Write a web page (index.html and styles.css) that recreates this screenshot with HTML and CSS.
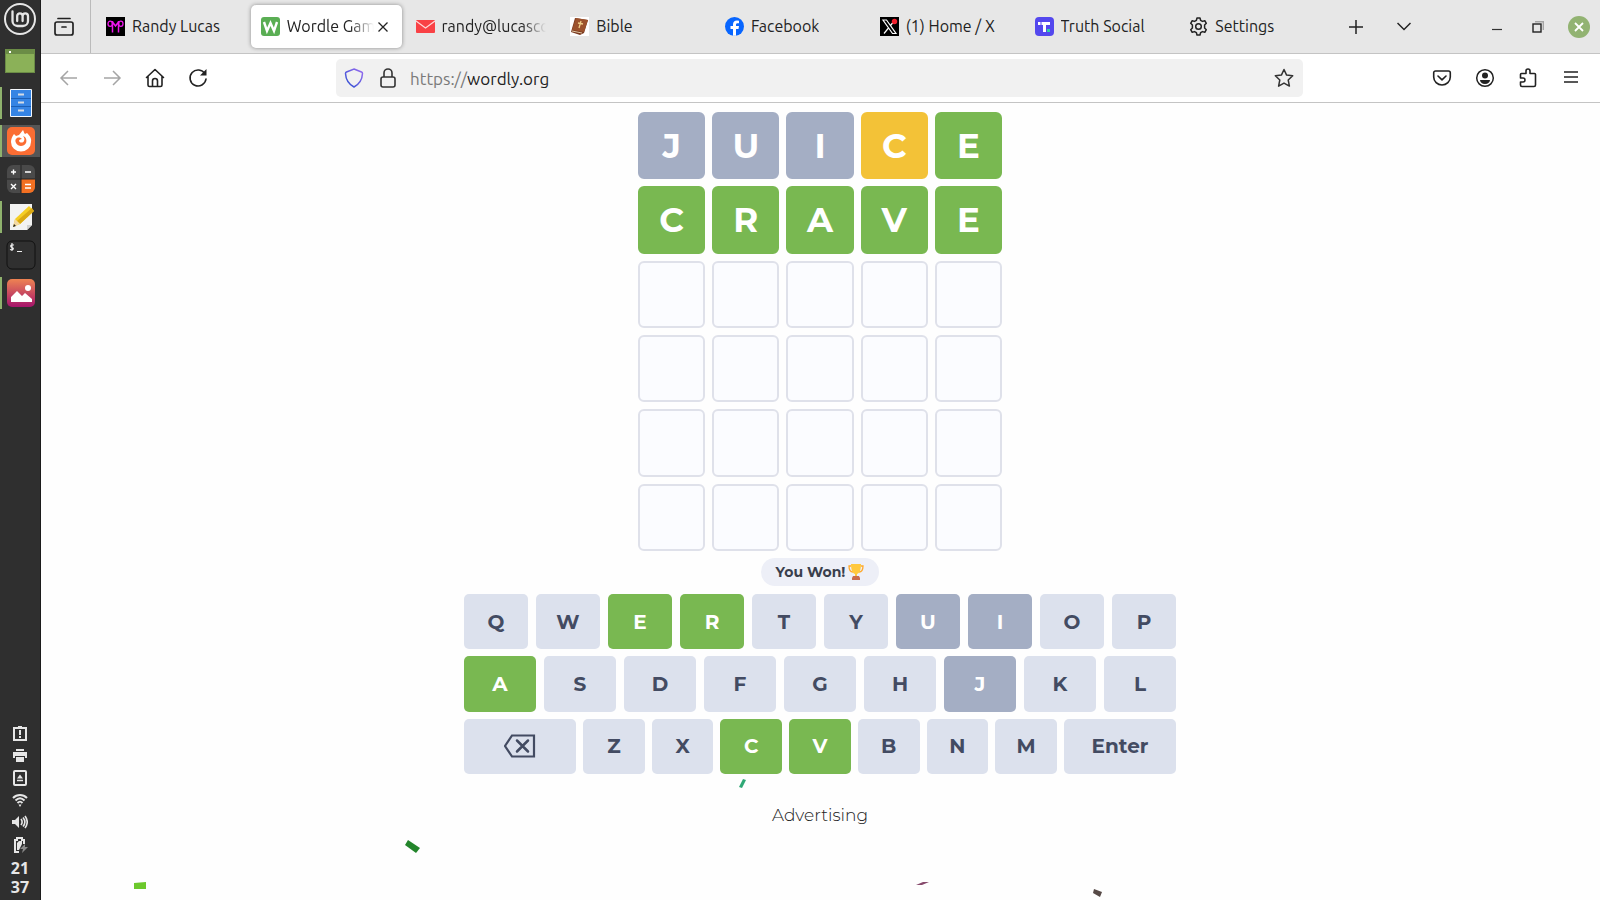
FILE: index.html
```
<!DOCTYPE html>
<html lang="en">
<head>
  <meta charset="UTF-8">
  <meta name="viewport" content="width=device-width, initial-scale=1">
  <title>Wordle Game</title>
  <link rel="stylesheet" href="styles.css">
</head>
<body>
  <!-- desktop panel -->
  <aside class="panel">
    <button class="launcher menu" aria-label="Menu">
      <svg width="34" height="34" viewBox="0 0 34 34" fill="none" stroke="#e6e6e6">
        <circle cx="17" cy="17" r="15" stroke-width="2"/>
        <path d="M9.500 9.500V19a5 5 0 0 0 5 5H20a5 5 0 0 0 5-5v-5a2.700 2.700 0 0 0-5.400 0v5M19.600 14a2.700 2.700 0 0 0-5.400 0v5" stroke-width="2.300" stroke-linecap="round"/>
      </svg>
    </button>
    <button class="launcher desktop" aria-label="Show desktop">
      <svg width="30" height="24" viewBox="0 0 30 24">
        <rect width="30" height="24" fill="#6b8c46"/>
        <rect x="1" y="5" width="28" height="18" fill="#8bb158"/>
        <rect x="4" y="2" width="2" height="2" fill="#fff"/>
      </svg>
    </button>
    <button class="launcher open" aria-label="Files">
      <svg width="22" height="28" viewBox="0 0 22 28">
        <rect width="22" height="28" rx="1" fill="#f5f8fc"/>
        <rect x="1" y="1" width="20" height="26" fill="#3584e4"/>
        <path d="M1 9.500h20M1 17.500h20" stroke="#1c5fb5"/>
        <path d="M8 5.500h6M8 13.500h6M8 21.500h6" stroke="#d5dbe3" stroke-width="2"/>
      </svg>
    </button>
    <button class="launcher open current" aria-label="Firefox">
      <svg width="28" height="28" viewBox="0 0 28 28">
        <rect width="28" height="28" rx="5" fill="#fb6d33"/>
        <path d="M7 7l2 2 3-1 4-5c1 2 1 3 2 4l2-1c2 2 5 5 4 9a10 9.500 0 0 1-20 0c0-3 1-5 3-8z" fill="#fff"/>
        <path d="M10 11c2-1 4 0 5 1-2 0-3 1-3 2 1 2 4 2 5 0 1-2 0-4-1-5 3 1 4 4 3 7-2 4-8 4-10 0-1-2-1-4 1-5z" fill="#fb6d33"/>
      </svg>
    </button>
    <button class="launcher" aria-label="Calculator">
      <svg width="28" height="28" viewBox="0 0 28 28">
        <rect width="28" height="28" rx="6" fill="#4a4a4a"/>
        <path d="M14 14h14v8a6 6 0 0 1-6 6h-8z" fill="#f37022"/>
        <path d="M14 0v28M0 14h28" stroke="#222"/>
        <path d="M4 7h5M6.500 4.500v5M18 7h6M4 19l5 5M9 19l-5 5M18 19.500h6M18 23h6" stroke="#fff" stroke-width="1.400"/>
      </svg>
    </button>
    <button class="launcher open" aria-label="Text editor">
      <svg width="28" height="28" viewBox="0 0 28 28">
        <path d="M3 1h22v21l-5 5H3z" fill="#f3f3f2"/>
        <path d="M20 27v-5h5z" fill="#d2d2d0"/>
        <path d="M6 24l2-8L22 3l5 5-14 13z" fill="#f5ce24"/>
        <path d="M25 5l2 3-14 13-3-3z" fill="#dba914"/>
        <path d="M6 24l2-8 5 5z" fill="#f3d9a4"/>
        <path d="M6 24l1-3 2 2z" fill="#222"/>
      </svg>
    </button>
    <button class="launcher" aria-label="Terminal">
      <svg width="30" height="30" viewBox="0 0 30 30">
        <rect x="1" y="1" width="28" height="28" rx="5" fill="#303030" stroke="#111"/>
        <path d="M8 5c-4-1-4 2-2 2.500s2 3-2 2M6 3v8M11 11.500h5" fill="none" stroke="#eee" stroke-width="1.200"/>
      </svg>
    </button>
    <button class="launcher open" aria-label="Image viewer">
      <svg width="28" height="28" viewBox="0 0 28 28">
        <defs>
          <linearGradient id="sunset" x1="0" y1="0" x2="0" y2="1">
            <stop offset="0" stop-color="#ee8352"/>
            <stop offset="1" stop-color="#a5146c"/>
          </linearGradient>
        </defs>
        <rect width="28" height="28" rx="5" fill="url(#sunset)"/>
        <path d="M4 23v-5l6-6 5 5 3-3 7 6v3z" fill="#fff"/>
        <circle cx="21" cy="9" r="3" fill="#fff"/>
      </svg>
    </button>

    <div class="tray">
      <div class="tray-icons">
        <svg width="16" height="16" viewBox="0 0 16 16" fill="none" stroke="#e6e6e6" stroke-width="2"><path d="M2 3h12v12H2z"/><path d="M6 2h4M8 5v5M8 11v2"/></svg>
        <svg width="16" height="16" viewBox="0 0 16 16" fill="#e6e6e6"><path d="M4 2h8v2H4zM1 5h14v6h-2V9H3v2H1zM4 10h8v5H4z"/></svg>
        <svg width="16" height="16" viewBox="0 0 16 16" fill="none" stroke="#e6e6e6" stroke-width="2"><rect x="2" y="1" width="12" height="14" rx="1"/><path d="M5 10.500h6" stroke-width="1.500"/><path d="M5 8.500l3-4 3 4z" fill="#e6e6e6" stroke="none"/></svg>
        <svg width="16" height="16" viewBox="0 0 16 16" fill="none" stroke="#e6e6e6" stroke-width="2"><path d="M1 6c4-4 10-4 14 0M3.500 8.500c3-3 6-3 9 0M5.500 11c2-2 3-2 5 0"/><path d="M6.500 12.500h3L8 15z" fill="#e6e6e6" stroke="none"/></svg>
        <svg width="16" height="16" viewBox="0 0 16 16" fill="none" stroke="#e6e6e6" stroke-width="1.600"><path d="M0 6h3l4-4v12l-4-4H0z" fill="#e6e6e6" stroke="none"/><path d="M9 5c1.500 2 1.500 4 0 6M11 3.500c2.500 3 2.500 6 0 9M13 2c3 4 3 8 0 12"/></svg>
        <svg width="16" height="16" viewBox="0 0 16 16" fill="none" stroke="#e6e6e6" stroke-width="2"><path d="M7 15H3V3h2V1h5v2h2v4"/><path d="M5 13V6l2-2h3v3l-3 6z" fill="#e6e6e6" stroke="none"/><path d="M13 7l-5 5h3l-1 4 6-6h-3z" fill="#8a8a8a" stroke="none"/></svg>
      </div>
      <div class="clock"><span>21</span><span>37</span></div>
    </div>
  </aside>

  <div class="browser">
    <header class="tabbar">
      <button class="recent" aria-label="Recent browsing">
        <svg width="20" height="20" viewBox="0 0 20 20" fill="none" stroke="#222" stroke-width="1.700" stroke-linecap="round"><path d="M4 1.500h12M1 7a2 2 0 0 1 2-2h14a2 2 0 0 1 2 2v9a2 2 0 0 1-2 2H3a2 2 0 0 1-2-2zM8 10h4"/></svg>
      </button>
      <nav class="tabs">
        <div class="tab">
          <button class="tab-link">
            <svg width="19" height="19" viewBox="0 0 19 19"><rect width="19" height="19" fill="#000"/><path d="M6.500 15.500V4M12.500 15.500V4M6.500 5l3 4 3-4" fill="none" stroke="#f017ef" stroke-width="1.500"/><ellipse cx="4.200" cy="6.800" rx="2.200" ry="2.600" fill="none" stroke="#f017ef" stroke-width="1.300"/><ellipse cx="14.800" cy="6.800" rx="2.200" ry="2.600" fill="none" stroke="#f017ef" stroke-width="1.300"/></svg>
            <span>Randy Lucas</span>
          </button>
        </div>
        <div class="tab active">
          <button class="tab-link">
            <svg width="19" height="19" viewBox="0 0 19 19"><rect width="19" height="19" rx="3" fill="#5aae54"/><path d="M3 5l3 9 3.500-8L13 14l3-9" fill="none" stroke="#fff" stroke-width="2.400"/></svg>
            <span class="fade">Wordle Game</span>
          </button>
          <button class="tab-close" aria-label="Close tab">
            <svg width="10" height="10" viewBox="0 0 10 10" stroke="#222" stroke-width="1.300"><path d="M0.500 0.500l9 9M9.500 0.500l-9 9"/></svg>
          </button>
        </div>
        <div class="tab">
          <button class="tab-link">
            <svg width="19" height="19" viewBox="0 0 19 19"><rect y="3" width="19" height="13" rx="1" fill="#f94145"/><path d="M0 4l9.500 7L19 4" fill="none" stroke="#ffd9d9" stroke-width="1.200"/></svg>
            <span class="fade">randy@lucasco</span>
          </button>
        </div>
        <div class="tab">
          <button class="tab-link">
            <svg width="19" height="19" viewBox="0 0 19 19"><rect width="19" height="19" fill="#fff"/><path d="M5 1l13 2-4 13-4 2L1 15z" fill="#7a3a20"/><path d="M6 1l12 2-4 12-12-2z" fill="#9c522d"/><path d="M11 4l-2 7M8 6l5 1" stroke="#f0cf8a" stroke-width="1.300"/><path d="M2 14l10 2" stroke="#e2c8a5"/></svg>
            <span>Bible</span>
          </button>
        </div>
        <div class="tab">
          <button class="tab-link">
            <svg width="19" height="19" viewBox="0 0 19 19"><circle cx="9.500" cy="9.500" r="9.500" fill="#0866ff"/><path d="M8 18.800V12H5.500V9H8V7.500C8 5 9.500 3.500 12 3.500l2 .2v2.500h-1.500c-1 0-1.500.5-1.500 1.500V9h3l-.5 3H11v6.800z" fill="#fff"/></svg>
            <span>Facebook</span>
          </button>
        </div>
        <div class="tab">
          <button class="tab-link">
            <svg width="19" height="19" viewBox="0 0 19 19"><rect width="19" height="19" fill="#000"/><path d="M3 3h3.500L16 16.500h-3.500zM15 3L10.500 8.500M8.500 11L4 16.500" fill="none" stroke="#fff" stroke-width="1.200"/><circle cx="14.500" cy="4.500" r="2.700" fill="#f4212e"/></svg>
            <span>(1) Home / X</span>
          </button>
        </div>
        <div class="tab">
          <button class="tab-link">
            <svg width="19" height="19" viewBox="0 0 19 19"><rect width="19" height="19" rx="4" fill="#5448ee"/><path d="M3 5h2.500v3H3zM6.500 5H15v3h-4v7H8V8H6.500z" fill="#fff"/><rect x="12" y="12" width="3" height="3" fill="#2fd3a5"/></svg>
            <span>Truth Social</span>
          </button>
        </div>
        <div class="tab">
          <button class="tab-link">
            <svg width="19" height="19" viewBox="0 0 19 19" fill="none" stroke="#222" stroke-width="1.500" stroke-linejoin="round"><path d="M8 1h3l.6 2.300 1.900 1.100 2.300-.7 1.500 2.600-1.700 1.700v3l1.700 1.700-1.500 2.600-2.300-.7-1.900 1.100L11 18H8l-.6-2.300-1.900-1.100-2.300.7-1.500-2.600L3.400 11V8L1.700 6.300l1.500-2.600 2.300.7 1.900-1.100z"/><circle cx="9.500" cy="9.500" r="2.800"/></svg>
            <span>Settings</span>
          </button>
        </div>
      </nav>
      <div class="tab-tools">
        <button aria-label="New tab">
          <svg width="14" height="14" viewBox="0 0 14 14" stroke="#222" stroke-width="1.500"><path d="M7 0v14M0 7h14"/></svg>
        </button>
        <button aria-label="List all tabs">
          <svg width="14" height="14" viewBox="0 0 14 14" fill="none" stroke="#222" stroke-width="1.500"><path d="M0.500 3L7 9.500 13.500 3"/></svg>
        </button>
      </div>
      <div class="window-tools">
        <button aria-label="Minimize">
          <svg width="12" height="12" viewBox="0 0 12 12" stroke="#333" stroke-width="1.200"><path d="M1 8.500h10"/></svg>
        </button>
        <button aria-label="Restore">
          <svg width="12" height="12" viewBox="0 0 12 12" fill="none"><path d="M3 .7h8.300V9" stroke="#a5a5a5" stroke-width="1.400"/><rect x="1" y="3" width="8" height="8" stroke="#222" stroke-width="1.400"/></svg>
        </button>
        <button aria-label="Close">
          <svg width="22" height="22" viewBox="0 0 22 22"><circle cx="11" cy="11" r="11" fill="#92b372"/><path d="M7 7l8 8M15 7l-8 8" stroke="#fff" stroke-width="1.800"/></svg>
        </button>
      </div>
    </header>

    <div class="toolbar">
      <div class="nav-buttons">
        <button aria-label="Back" disabled>
          <svg width="20" height="20" viewBox="0 0 20 20" fill="none" stroke="#a5a5a5" stroke-width="1.500"><path d="M18 10H2M9 3l-7 7 7 7"/></svg>
        </button>
        <button aria-label="Forward" disabled>
          <svg width="20" height="20" viewBox="0 0 20 20" fill="none" stroke="#a5a5a5" stroke-width="1.500"><path d="M2 10h16M11 3l7 7-7 7"/></svg>
        </button>
        <button aria-label="Home">
          <svg width="20" height="20" viewBox="0 0 20 20" fill="none" stroke="#222" stroke-width="1.600" stroke-linejoin="round" stroke-linecap="round"><path d="M1.500 9.500L10 1.500l8.500 8M3 8.500V17a1.500 1.500 0 0 0 1.500 1.500h11A1.500 1.500 0 0 0 17 17V8.500M7.500 18v-5a2.500 2.500 0 0 1 5 0v5"/></svg>
        </button>
        <button aria-label="Reload">
          <svg width="20" height="20" viewBox="0 0 20 20" fill="none" stroke="#222" stroke-width="1.600"><path d="M17 6A8 8 0 1 0 18 11" stroke-linecap="round"/><path d="M18.500 1v6.500H12z" fill="#222" stroke="none"/></svg>
        </button>
      </div>
      <div class="urlbar">
        <svg width="20" height="20" viewBox="0 0 20 20" fill="none" stroke-width="1.500">
          <defs>
            <linearGradient id="shield" x1="0" y1="1" x2="1" y2="0">
              <stop offset="0" stop-color="#2a4fd0"/>
              <stop offset="1" stop-color="#9a6cf0"/>
            </linearGradient>
          </defs>
          <path d="M10 1l7.500 3c.8.3 1 .8 1 1.500-.3 6-3 10.500-8.500 13.500C4.500 16 1.800 11.500 1.500 5.500c0-.7.200-1.200 1-1.500z" stroke="url(#shield)"/>
        </svg>
        <svg class="lock" width="20" height="20" viewBox="0 0 20 20" fill="none" stroke="#333" stroke-width="1.600"><rect x="3" y="9" width="14" height="10" rx="2"/><path d="M6 9V5a4 4 0 0 1 8 0v4"/></svg>
        <label class="scheme" for="url">https://</label>
        <input type="text" id="url" value="wordly.org">
        <button aria-label="Bookmark this page">
          <svg width="20" height="20" viewBox="0 0 20 20" fill="none" stroke="#333" stroke-width="1.500" stroke-linejoin="round"><path d="M10 1.500l2.600 5.600 6.100.7-4.500 4.200 1.200 6.100-5.400-3-5.400 3 1.200-6.100L1.300 7.800l6.100-.7z"/></svg>
        </button>
      </div>
      <div class="nav-buttons">
        <button aria-label="Save to Pocket">
          <svg width="20" height="20" viewBox="0 0 20 20" fill="none" stroke="#222" stroke-width="1.600" stroke-linecap="round" stroke-linejoin="round"><path d="M3.500 3h13a1.800 1.800 0 0 1 1.800 1.800V9a8.300 8 0 0 1-16.600 0V4.800A1.800 1.800 0 0 1 3.500 3zM6 8l4 3.800L14 8"/></svg>
        </button>
        <button aria-label="Account">
          <svg width="20" height="20" viewBox="0 0 20 20"><circle cx="10" cy="10" r="8.300" fill="none" stroke="#222" stroke-width="1.500"/><circle cx="10" cy="7.500" r="3" fill="#222"/><path d="M5 12h10c0 2-2 4-5 4s-5-2-5-4z" fill="#222"/></svg>
        </button>
        <button aria-label="Extensions">
          <svg width="20" height="20" viewBox="0 0 20 20" fill="none" stroke="#222" stroke-width="1.600" stroke-linejoin="round"><path d="M2.500 7V6.500a1 1 0 0 1 1-1H8V3a2 2 0 0 1 4 0v2.500h4.500a1 1 0 0 1 1 1V17a1.500 1.500 0 0 1-1.500 1.500H4A1.500 1.500 0 0 1 2.500 17v-3H5a2 2 0 0 0 0-4H2.500z"/></svg>
        </button>
        <button aria-label="Open menu">
          <svg width="20" height="20" viewBox="0 0 20 20" stroke="#222" stroke-width="1.500"><path d="M3 4h14M3 9h14M3 14h14"/></svg>
        </button>
      </div>
    </div>

    <main class="page">
      <div class="board">
        <div class="tile absent">J</div>
        <div class="tile absent">U</div>
        <div class="tile absent">I</div>
        <div class="tile present">C</div>
        <div class="tile correct">E</div>
        <div class="tile correct">C</div>
        <div class="tile correct">R</div>
        <div class="tile correct">A</div>
        <div class="tile correct">V</div>
        <div class="tile correct">E</div>
        <div class="tile"></div>
        <div class="tile"></div>
        <div class="tile"></div>
        <div class="tile"></div>
        <div class="tile"></div>
        <div class="tile"></div>
        <div class="tile"></div>
        <div class="tile"></div>
        <div class="tile"></div>
        <div class="tile"></div>
        <div class="tile"></div>
        <div class="tile"></div>
        <div class="tile"></div>
        <div class="tile"></div>
        <div class="tile"></div>
        <div class="tile"></div>
        <div class="tile"></div>
        <div class="tile"></div>
        <div class="tile"></div>
        <div class="tile"></div>
      </div>

      <div class="message">
        <span>You Won!</span>
        <svg width="16" height="16" viewBox="0 0 16 16"><path d="M3 2H1c0 4 1 6 4 6M13 2h2c0 4-1 6-4 6" fill="none" stroke="#ffa829" stroke-width="1.300"/><path d="M3 0h10c0 5-1 9-4 10v2H7v-2C4 9 3 5 3 0z" fill="#ffc83d"/><path d="M5 12h6l1 2v2H4v-2z" fill="#ca6b4d"/></svg>
      </div>

      <div class="keyboard">
        <div class="keys">
          <button class="key">Q</button>
          <button class="key">W</button>
          <button class="key correct">E</button>
          <button class="key correct">R</button>
          <button class="key">T</button>
          <button class="key">Y</button>
          <button class="key absent">U</button>
          <button class="key absent">I</button>
          <button class="key">O</button>
          <button class="key">P</button>
        </div>
        <div class="keys">
          <button class="key correct">A</button>
          <button class="key">S</button>
          <button class="key">D</button>
          <button class="key">F</button>
          <button class="key">G</button>
          <button class="key">H</button>
          <button class="key absent">J</button>
          <button class="key">K</button>
          <button class="key">L</button>
        </div>
        <div class="keys bottom">
          <button class="key wide" aria-label="Backspace">
            <svg width="32" height="24" viewBox="0 0 32 24" fill="none" stroke="#434b62" stroke-width="2.200"><path d="M8 1.500h22v21H8l-7-10.500z"/><path d="M13 6.500l11 11M24 6.500l-11 11" stroke-width="2.500" stroke-linecap="round"/></svg>
          </button>
          <button class="key">Z</button>
          <button class="key">X</button>
          <button class="key correct">C</button>
          <button class="key correct">V</button>
          <button class="key">B</button>
          <button class="key">N</button>
          <button class="key">M</button>
          <button class="key wide">Enter</button>
        </div>
      </div>

      <p class="ad">Advertising</p>

      <svg class="confetti" aria-hidden="true">
        <path d="M702 676l3 1-4 8-3-1z" fill="#2fa876"/>
        <path d="M367 737l12 8-4 5-11-8z" fill="#23852b"/>
        <path d="M93 780l12-1v7H93z" fill="#6cc82c"/>
        <path d="M875 782l7-3h6l-7 3z" fill="#874a6c"/>
        <path d="M1053 786l8 3-2 5-7-4z" fill="#574a47"/>
      </svg>
    </main>
  </div>
</body>
</html>
```
FILE: styles.css
```
* {
  margin: 0;
  padding: 0;
  box-sizing: border-box;
}
body {
  display: flex;
  height: 100vh;
  overflow: hidden;
  font-family: Ubuntu, "Open Sans", sans-serif;
  font-size: 16px;
  color: #222;
  background: #fefefe;
}
button {
  display: flex;
  align-items: center;
  justify-content: center;
  border: none;
  background: none;
  font: inherit;
  color: inherit;
  cursor: pointer;
}
svg {
  flex-shrink: 0;
}

/* desktop panel */
.panel {
  width: 41px;
  flex-shrink: 0;
  display: flex;
  flex-direction: column;
  background: #2f2f2f;
  border-right: 1px solid #1c1c1c;
}
.launcher {
  height: 32px;
  margin: 3px 0;
  border-left: 2px solid transparent;
}
.launcher.menu {
  height: 38px;
  margin: 0;
  border: none;
}
.launcher.desktop {
  height: 46px;
  margin: 0;
  border: none;
}
.launcher.open {
  border-left-color: #8fb26d;
}
.launcher.current {
  background: #565656;
}
.tray {
  margin-top: auto;
  padding-bottom: 3px;
}
.tray-icons {
  height: 134px;
  display: flex;
  flex-direction: column;
  align-items: center;
  justify-content: space-around;
}
.clock {
  display: flex;
  flex-direction: column;
  align-items: center;
  margin-top: 3px;
  font-family: "Noto Sans", sans-serif;
  font-size: 16px;
  font-weight: 700;
  line-height: 19px;
  color: #e6e6e6;
}

/* browser */
.browser {
  flex: 1;
  min-width: 0;
  display: flex;
  flex-direction: column;
}
.tabbar {
  display: flex;
  height: 54px;
  background: #e7e7e7;
  border-bottom: 1px solid #c4c4c4;
}
.recent {
  width: 50px;
  padding-right: 4px;
  border-right: 1px solid #bbb;
}
.tabs {
  flex: 1;
  display: flex;
  min-width: 0;
  padding-left: 3px;
}
.tab {
  flex: 0 1 151px;
  min-width: 0;
  display: flex;
  align-items: center;
  padding: 0 10px;
  margin: 5px 2px;
  border-radius: 5px;
}
.tab.active {
  background: #fff;
  box-shadow: 0 0 4px rgba(0, 0, 0, 0.4);
}
.tab-link {
  flex: 1;
  min-width: 0;
  justify-content: flex-start;
  gap: 7px;
  white-space: nowrap;
}
.tab-link span {
  overflow: hidden;
  padding-bottom: 2px;
}
.fade {
  mask-image: linear-gradient(to left, transparent, #000 24px);
}
.tab-close {
  width: 18px;
  height: 24px;
}
.tab-tools {
  display: flex;
  margin-right: 48px;
}
.tab-tools button {
  width: 48px;
}
.window-tools {
  display: flex;
  padding-right: 1px;
}
.window-tools button {
  width: 41px;
}
.toolbar {
  display: flex;
  align-items: center;
  gap: 117px;
  height: 49px;
  padding: 0 8px 0 6px;
  background: #fff;
  border-bottom: 1px solid #c4c4c4;
}
.nav-buttons {
  display: flex;
}
.nav-buttons button {
  width: 43px;
  height: 38px;
}
.urlbar {
  flex: 1;
  display: flex;
  align-items: center;
  height: 38px;
  padding: 0 9px 0 8px;
  border-radius: 5px;
  background: #f1f1f1;
  font-size: 17px;
}
.urlbar .lock {
  margin: 0 12px 0 14px;
}
.scheme {
  color: #7a7a7a;
}
.urlbar input {
  flex: 1;
  min-width: 0;
  border: none;
  outline: none;
  background: none;
  font: inherit;
  color: inherit;
}

/* game */
.page {
  position: relative;
  flex: 1;
  display: flex;
  flex-direction: column;
  align-items: center;
  padding: 9px 17px 0 16px;
  font-family: Montserrat, Inter, sans-serif;
}
.board {
  display: grid;
  grid-template-columns: repeat(5, 1fr);
  grid-template-rows: repeat(6, 1fr);
  gap: 7px;
  width: 100%;
  max-width: 364px;
  height: 439px;
}
.tile {
  display: flex;
  align-items: center;
  justify-content: center;
  border: 2px solid #dfe1ea;
  border-radius: 6px;
  background: #fbfcff;
  font-size: 34px;
  font-weight: 700;
  color: #fff;
}
.message {
  display: flex;
  align-items: center;
  gap: 3px;
  height: 28px;
  margin: 7px 0 8px;
  padding: 0 15px;
  border-radius: 14px;
  background: #edeff7;
  font-size: 14px;
  font-weight: 700;
  color: #393e4c;
}
.keyboard {
  display: flex;
  flex-direction: column;
  gap: 7px;
  width: 100%;
  max-width: 712px;
  height: 180px;
}
.keys {
  flex: 1;
  display: flex;
  gap: 8px;
}
.keys.bottom {
  gap: 7px;
}
.key {
  flex: 1;
  min-width: 0;
  border-radius: 5px;
  background: #dce1ed;
  font-size: 20px;
  font-weight: 700;
  color: #434b62;
}
.key.wide {
  flex: 0 0 112px;
}
.absent {
  background: #a4aec4;
  border-color: #a4aec4;
  color: #fff;
}
.present {
  background: #f3c237;
  border-color: #f3c237;
}
.correct {
  background: #79b851;
  border-color: #79b851;
  color: #fff;
}
.ad {
  margin-top: 29px;
  font-size: 17px;
  font-weight: 300;
  line-height: 24px;
}
.confetti {
  position: absolute;
  top: 0;
  left: 0;
  width: 100%;
  height: 100%;
  pointer-events: none;
}
```
